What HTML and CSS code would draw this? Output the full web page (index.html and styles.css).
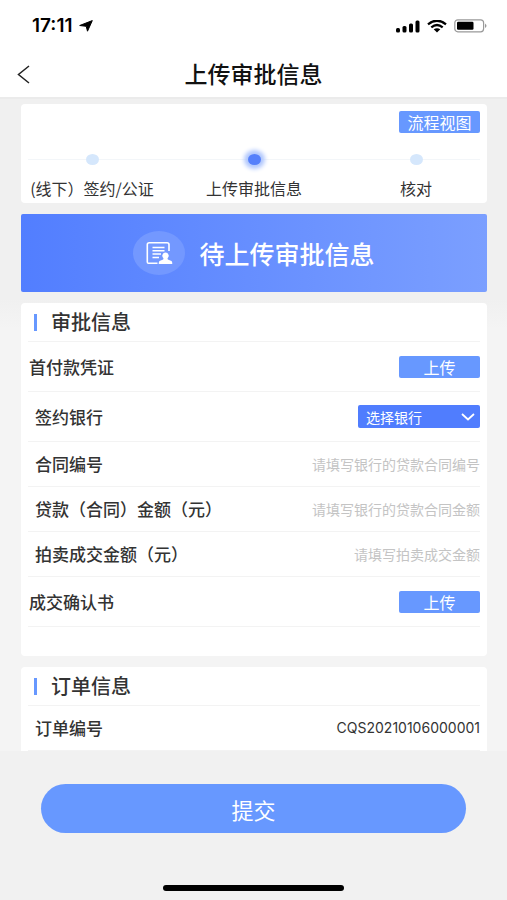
FILE: index.html
```html
<!DOCTYPE html>
<html lang="zh-CN">
<head>
<meta charset="utf-8">
<meta name="viewport" content="width=device-width, initial-scale=1">
<title>上传审批信息</title>
<link rel="stylesheet" href="styles.css">
</head>
<body>
<header class="header">
  <div class="status">
    <div class="status-group">
      <span class="time">17:11</span>
      <svg class="arrow" width="14" height="12" viewBox="0 0 14 12" aria-hidden="true"><path d="M13.300.6 8.500 11.200 7.200 6.300.7 5.500Z" fill="#000" stroke="#000" stroke-width="1" stroke-linejoin="round"/></svg>
    </div>
    <div class="status-group status-icons">
      <svg width="24" height="13" viewBox="0 0 24 13" aria-hidden="true"><rect x="0" y="8" width="4" height="4.500" rx="1.500"/><rect x="6.500" y="6" width="4" height="6.500" rx="1.500"/><rect x="13" y="3.500" width="4" height="9" rx="1.500"/><rect x="19.500" y=".5" width="4" height="12" rx="1.500"/></svg>
      <svg width="20" height="13" viewBox="0 0 20 13" aria-hidden="true"><path d="M1 4.300Q10-2.900 19 4.300M4.300 7.300Q10 2.800 15.700 7.300" fill="none" stroke="#000" stroke-width="2.300"/><path d="M6.700 9.300Q10 7 13.300 9.300L10 12.500Z"/></svg>
      <svg width="34" height="14" viewBox="0 0 34 14" aria-hidden="true"><rect x=".8" y=".8" width="28.800" height="12" rx="3" fill="none" stroke="#999" stroke-width="1.200"/><rect x="3" y="2.800" width="16.500" height="8" rx="1.200"/><path d="M31 4.500q3 2.300 0 4.600Z" fill="#999"/></svg>
    </div>
  </div>
  <nav class="nav">
    <a class="back" href="#" aria-label="返回"><svg width="13" height="19" viewBox="0 0 13 19" aria-hidden="true"><path d="M12 1 1.500 9.500 12 18" fill="none" stroke="#222" stroke-width="1.500"/></svg></a>
    <h1 class="title">上传审批信息</h1>
  </nav>
</header>

<main class="main">
  <section class="card progress">
    <button class="btn view-btn" type="button">流程视图</button>
    <ol class="steps">
      <li class="step"><span class="dot-box"><span class="dot"></span></span>(线下）签约/公证</li>
      <li class="step"><span class="dot-box"><span class="dot dot-active"></span></span>上传审批信息</li>
      <li class="step"><span class="dot-box"><span class="dot"></span></span>核对</li>
    </ol>
  </section>

  <section class="banner">
    <span class="banner-icon">
      <svg width="28" height="24" viewBox="0 0 28 24" aria-hidden="true"><path d="M12.500 22.300H3.500Q2.300 22.300 2.300 21V3.500Q2.300 1.700 4.300 1.700H22Q24 1.700 24 3.500V10" fill="none" stroke="#fff" stroke-width="1.600"/><path d="M7.500 6.500H19.500M7.500 9.800H19.500M7.500 13.100H16M7.500 16.400H14" stroke="#fff" stroke-width="1.500"/><path d="M20.500 11.500a3.200 3.200 0 0 1 2 5.700L22.800 18.500 26.500 20Q27.300 20.500 27.300 23H13.700Q13.700 20.500 14.500 20L18.200 18.500 18.500 17.200a3.200 3.200 0 0 1 2-5.700Z" fill="#fff"/></svg>
    </span>
    <span>待上传审批信息</span>
  </section>

  <form id="approval" class="card form">
    <h2 class="section-title">审批信息</h2>
    <div class="row row-tall row-flush"><span>首付款凭证</span><button class="btn" type="button" aria-label="上传首付款凭证">上传</button></div>
    <div class="row row-tall">
      <label for="bank">签约银行</label>
      <span class="select-box">
        <select id="bank"><option>选择银行</option></select>
        <svg class="chevron" width="14" height="8" viewBox="0 0 14 8" aria-hidden="true"><path d="M1 1 7 6.500 13 1" fill="none" stroke="#fff" stroke-width="1.800"/></svg>
      </span>
    </div>
    <div class="row"><label for="contract">合同编号</label><input id="contract" type="text" placeholder="请填写银行的贷款合同编号"></div>
    <div class="row"><label for="loan">贷款（合同）金额（元）</label><input id="loan" type="text" placeholder="请填写银行的贷款合同金额"></div>
    <div class="row"><label for="price">拍卖成交金额（元）</label><input id="price" type="text" placeholder="请填写拍卖成交金额"></div>
    <div class="row row-tall row-flush"><span>成交确认书</span><button class="btn" type="button" aria-label="上传成交确认书">上传</button></div>
  </form>

  <section class="card order">
    <h2 class="section-title">订单信息</h2>
    <div class="row"><span>订单编号</span><span class="order-id">CQS20210106000001</span></div>
  </section>
</main>

<footer class="footer">
  <button class="submit" type="submit" form="approval">提交</button>
  <div class="home-bar"></div>
</footer>
</body>
</html>
```
FILE: styles.css
```css
* {
  box-sizing: border-box;
}

body {
  margin: 0;
  min-height: 100vh;
  display: flex;
  flex-direction: column;
  background: #f1f1f1;
  color: #333;
  font-family: "Noto Sans CJK SC", sans-serif;
  font-size: 17px;
  line-height: 24px;
}

button,
input,
select {
  font-family: inherit;
  border: 0;
  margin: 0;
}

/* Header */
.header {
  background: #fff;
  border-bottom: 2px solid #ebebeb;
}

.status {
  display: flex;
  justify-content: space-between;
  align-items: center;
  height: 52px;
  padding: 0 19px 0 32px;
}

.status-group {
  display: flex;
  align-items: center;
  gap: 7px;
}

.time {
  font-family: Inter, sans-serif;
  font-size: 19px;
  font-weight: 600;
  color: #000;
}

.nav {
  display: grid;
  grid-template-columns: 36px 1fr 36px;
  align-items: center;
  height: 45px;
  padding: 0 17px;
}

.back {
  display: flex;
}

.title {
  margin: 0;
  padding-bottom: 4px;
  font-size: 23px;
  font-weight: 500;
  line-height: 32px;
  text-align: center;
  color: #111;
}

/* Cards */
.main {
  display: flex;
  flex-direction: column;
  gap: 11px;
  padding: 5px 20px 0 21px;
  background: linear-gradient(#f0f0f0 200px, #f4f4f4 230px);
}

.card {
  padding: 0 7px;
  background: #fff;
  border-radius: 4px;
}

.btn {
  width: 81px;
  height: 22px;
  padding: 0;
  border-radius: 2px;
  background: #6798ff;
  color: #fff;
  font-size: 16px;
  line-height: 20px;
}

/* Progress */
.progress {
  display: flex;
  flex-direction: column;
  padding-top: 7px;
  padding-bottom: 3px;
}

.view-btn {
  align-self: flex-end;
}

.steps {
  display: grid;
  grid-template-columns: repeat(3, 1fr);
  margin: 14px -17px 0;
  padding: 0;
  list-style: none;
  background: linear-gradient(#f3f6f9, #f3f6f9) center 12px / calc(100% - 34px) 1px no-repeat;
}

.step {
  display: flex;
  flex-direction: column;
  align-items: center;
  gap: 5px;
  font-size: 16px;
  white-space: nowrap;
}

.dot-box {
  display: flex;
  align-items: center;
  height: 24px;
}

.dot {
  width: 13px;
  height: 11px;
  border-radius: 50%;
  background: #d5e7fc;
}

.dot-active {
  background: #5580fb;
  box-shadow: 0 0 4px 4px #afc6fd;
}

/* Banner */
.banner {
  display: flex;
  align-items: center;
  justify-content: center;
  gap: 14px;
  height: 78px;
  border-radius: 2px;
  background: linear-gradient(90deg, #527eff, #7b9fff);
  color: #fff;
  font-size: 25px;
  font-weight: 500;
}

.banner-icon {
  display: flex;
  align-items: center;
  justify-content: center;
  width: 52px;
  height: 44px;
  border-radius: 50%;
  background: #7398ff;
}

/* Form rows */
.form {
  padding-bottom: 29px;
}

.section-title {
  display: flex;
  align-items: center;
  gap: 14px;
  height: 39px;
  margin: 0;
  padding-left: 6px;
  border-bottom: 1px solid #f3f3f3;
  font-size: 20px;
  font-weight: 500;
}

.section-title::before {
  content: "";
  width: 3px;
  height: 17px;
  background: #6798ff;
}

.row {
  display: flex;
  align-items: center;
  justify-content: space-between;
  height: 45px;
  padding-left: 7px;
  border-bottom: 1px solid #f3f3f3;
  font-weight: 500;
  white-space: nowrap;
}

.row-tall {
  height: 50px;
}

.row-flush {
  padding-left: 1px;
}

.row input {
  flex: 1;
  min-width: 0;
  height: 24px;
  padding: 0;
  background: transparent;
  color: #333;
  font-size: 14px;
  text-align: right;
}

.row input::placeholder {
  color: #c4c4c4;
}

.select-box {
  position: relative;
  display: flex;
}

.select-box select {
  width: 122px;
  height: 23px;
  padding: 0 8px;
  appearance: none;
  border-radius: 2px;
  background: #507dfe;
  color: #fff;
  font-size: 14px;
}

.chevron {
  position: absolute;
  top: 8px;
  right: 5px;
  pointer-events: none;
}

.order {
  border-radius: 4px 4px 0 0;
}

.order-id {
  font-family: Inter, sans-serif;
  font-size: 14px;
  font-weight: 400;
}

/* Footer */
.footer {
  flex: 1;
  display: flex;
  flex-direction: column;
  justify-content: space-between;
  align-items: center;
  padding: 33px 41px 9px;
}

.submit {
  width: 100%;
  height: 49px;
  border-radius: 25px;
  background: #6798ff;
  color: #fff;
  font-size: 22px;
}

.home-bar {
  width: 181px;
  height: 6px;
  border-radius: 3px;
  background: #000;
}
```
